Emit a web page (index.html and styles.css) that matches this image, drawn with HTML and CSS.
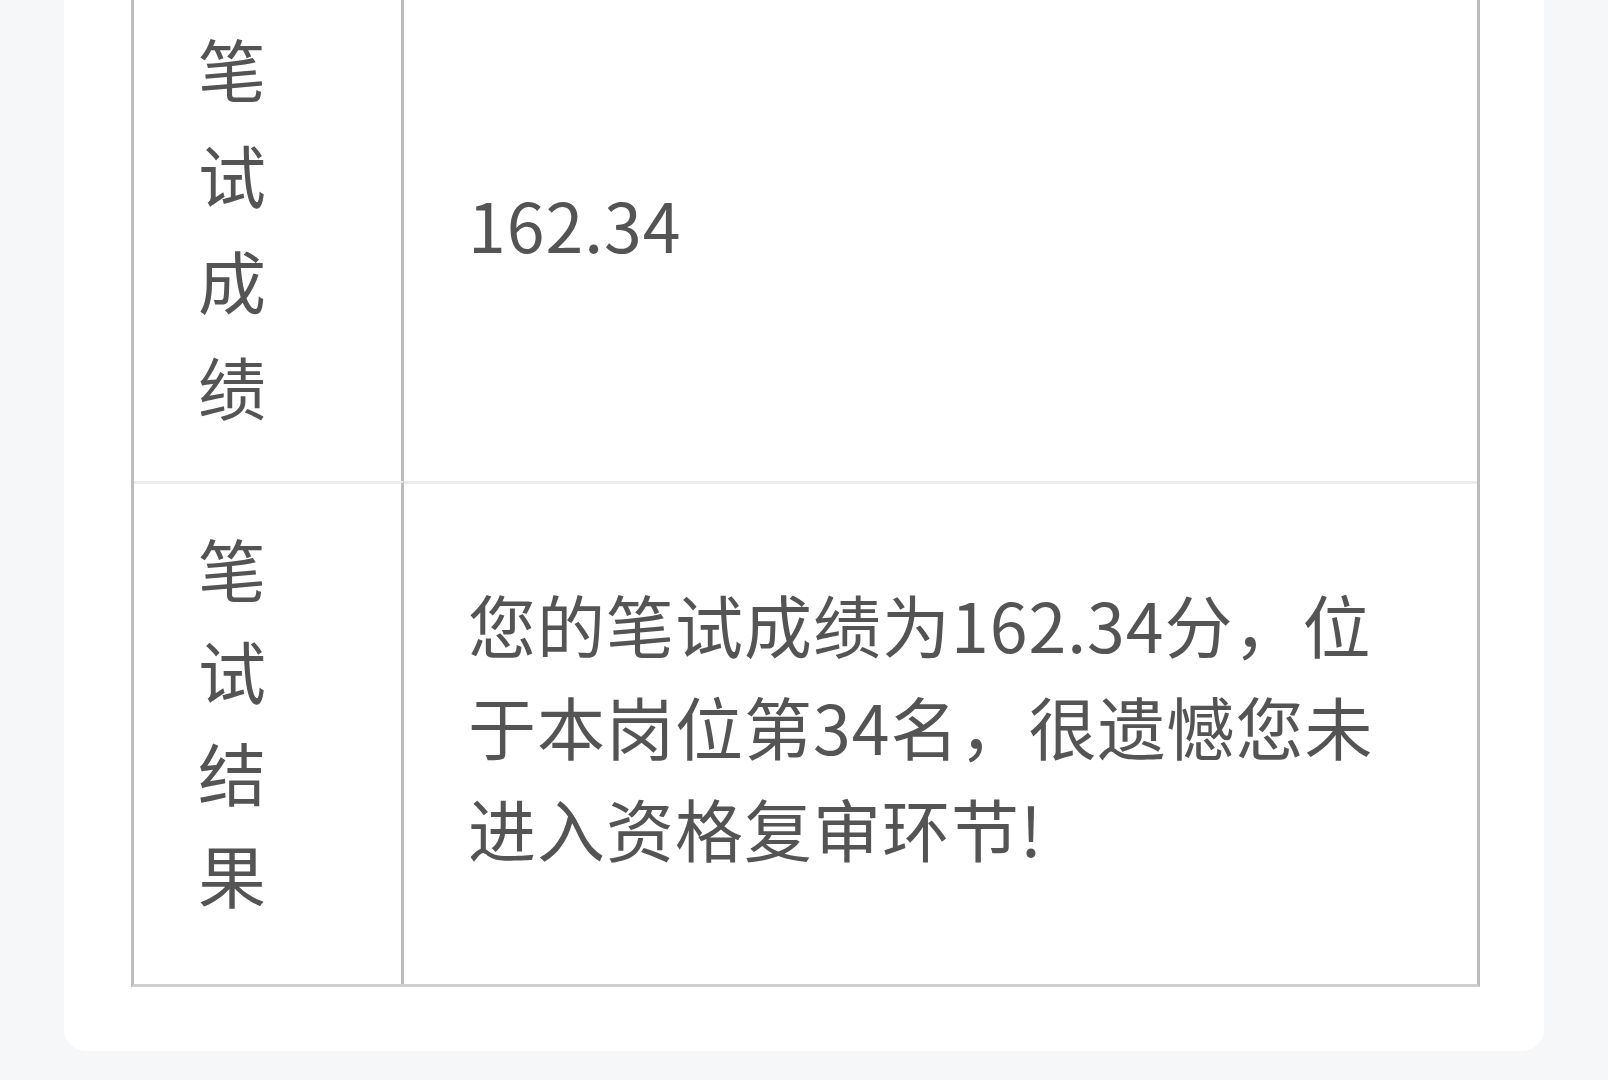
FILE: index.html
```html
<!DOCTYPE html>
<html lang="zh-CN">
<head>
<meta charset="utf-8">
<title>笔试成绩</title>
<link rel="stylesheet" href="styles.css">
</head>
<body>
<div class="page">
  <div class="card">
    <div class="table">
      <div class="cell label first"><span class="label-text">笔试成绩</span></div>
      <div class="cell value first"><span class="value-text">162.34</span></div>
      <div class="cell label second"><span class="label-text">笔试结果</span></div>
      <div class="cell value second"><span class="value-text">您的笔试成绩为162.34分，位于本岗位第34名，很遗憾您未进入资格复审环节!</span></div>
    </div>
  </div>
</div>
</body>
</html>
```
FILE: styles.css
```css
html, body {
  margin: 0;
  padding: 0;
  background: #f5f7f9;
}
body {
  font-family: "Noto Sans CJK SC", "Noto Sans", sans-serif;
  color: #545454;
  overflow: hidden;
}
.page {
  padding: 0 64px;
  margin-top: -18px;
}
.card {
  background: #ffffff;
  border-radius: 0 0 22px 22px;
  padding: 0 64px 64px 67px;
}
.table {
  display: grid;
  grid-template-columns: 270px 1fr;
  border-left: 3px solid #bcbcbc;
  border-right: 3px solid #bcbcbc;
  border-bottom: 3px solid #cfcfcf;
}
.cell {
  font-size: 68px;
  line-height: 102px;
}
.label {
  border-right: 3px solid #bcbcbc;
  padding: 33px 0 59px 64px;
}
.label.first {
  line-height: 106px;
  padding-bottom: 42px;
}
.label-text {
  display: block;
  width: 1em;
  word-break: break-all;
}
.value {
  display: flex;
  align-items: center;
  padding: 0 60px 16px 64px;
  letter-spacing: 1px;
}
.second {
  border-top: 3px solid #ececec;
}
```
